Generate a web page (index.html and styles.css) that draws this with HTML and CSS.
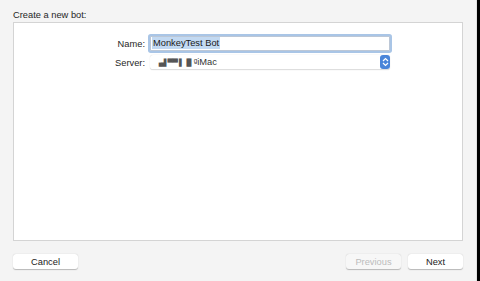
FILE: index.html
```html
<!DOCTYPE html>
<html lang="en">
<head>
    <meta charset="UTF-8">
    <title>Create a new bot</title>
    <link rel="stylesheet" href="styles.css">
</head>
<body>
    <div class="window">
        <div class="heading">Create a new bot:</div>

        <div class="panel">
            <div class="form">
                <label class="label" for="botName">Name:</label>
                <div class="field focused">
                    <span class="selected">MonkeyTest Bot</span>
                </div>

                <label class="label">Server:</label>
                <div class="popup">
                    <span class="server"><span class="masked">▗▟ ▀▀ ▌▐▌</span>ᶢiMac</span>
                    <span class="stepper">
                        <svg width="7" height="10" viewBox="0 0 7 10">
                            <path d="M1 4 L3.5 1.5 L6 4 M1 6 L3.5 8.5 L6 6" fill="none" stroke="#fff" stroke-width="1.2"/>
                        </svg>
                    </span>
                </div>
            </div>
        </div>

        <div class="buttons">
            <button class="btn">Cancel</button>
            <div class="right-buttons">
                <button class="btn" disabled>Previous</button>
                <button class="btn">Next</button>
            </div>
        </div>
    </div>
</body>
</html>
```

FILE: styles.css
```css
html, body {
    margin: 0;
    padding: 0;
    background-color: #000;
}

body {
    font-family: "Liberation Sans", Arial, sans-serif;
    font-size: 9.3px;
    color: #222;
}

.window {
    width: 477px;
    height: 281px;
    box-sizing: border-box;
    background-color: #f4f4f4;
    border-right: 1px solid #e2e2e2;
    padding: 8px 13px 0 13px;
    display: flex;
    flex-direction: column;
}

.heading {
    height: 14px;
    line-height: 14px;
    color: #262626;
}

.panel {
    height: 219px;
    box-sizing: border-box;
    background-color: #fff;
    border: 1px solid #d4d4d4;
    padding-top: 13px;
}

.form {
    display: grid;
    grid-template-columns: 131px 240px;
    column-gap: 5px;
    row-gap: 4px;
    align-items: center;
}

.label {
    text-align: right;
    color: #262626;
}

.field {
    height: 15px;
    box-sizing: border-box;
    background-color: #fff;
    border: 1px solid #bcc7d6;
    box-shadow: 0 0 0 2px #a9c5e6;
    border-radius: 1px;
    padding: 0 1px;
    line-height: 13px;
    color: #1a1a1a;
}

.selected {
    background-color: #c2d9f2;
    padding: 1px 1px;
}

.popup {
    height: 15px;
    box-sizing: border-box;
    display: flex;
    align-items: center;
    justify-content: space-between;
    background-color: #fff;
    border-bottom: 1px solid #dedede;
    box-shadow: 0 0 1px rgba(0, 0, 0, 0.2);
    border-radius: 3px;
    padding-left: 6px;
}

.server {
    color: #333;
}

.masked {
    font-family: "DejaVu Sans", sans-serif;
    font-size: 7px;
    color: #555;
    letter-spacing: -0.5px;
}

.stepper {
    width: 10px;
    height: 14px;
    background-color: #4a85d9;
    border-radius: 3px;
    display: flex;
    align-items: center;
    justify-content: center;
}

.buttons {
    margin-top: 13px;
    display: flex;
    justify-content: space-between;
}

.right-buttons {
    display: flex;
    gap: 7px;
}

.btn {
    width: 65px;
    height: 15px;
    padding: 0;
    font-family: "Liberation Sans", Arial, sans-serif;
    font-size: 9.3px;
    color: #222;
    background-color: #fff;
    border: none;
    border-radius: 3px;
    box-shadow: 0 0.5px 1px rgba(0, 0, 0, 0.25);
}

.right-buttons .btn {
    width: 55px;
}

.btn:disabled {
    background-color: #f7f7f7;
    color: #bcbcbc;
}
```
